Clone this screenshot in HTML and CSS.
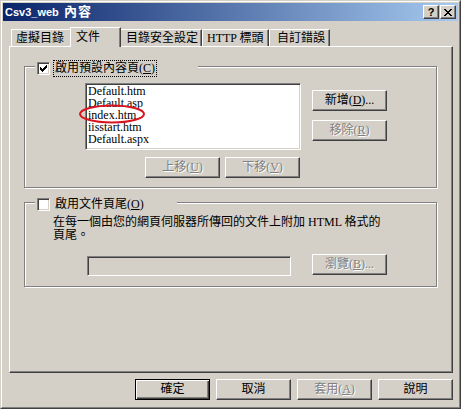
FILE: index.html
```html
<!DOCTYPE html>
<html lang="zh-Hant">
<head>
<meta charset="utf-8">
<title>Csv3_web 內容</title>
<link rel="stylesheet" href="styles.css">
</head>
<body>
<div class="window">
  <div class="frame">
    <div class="titlebar">
      <span class="title">Csv3_web <span class="title-cjk">內容</span></span>
      <div class="caption-btns">
        <span class="cbtn help">?</span>
        <span class="cbtn close">
          <svg width="8" height="7" viewBox="0 0 8 7"><path d="M0 0h2v1h-2z M6 0h2v1h-2z M1 1h2v1h-2z M5 1h2v1h-2z M2 2h4v1h-4z M3 3h2v1h-2z M2 4h4v1h-4z M1 5h2v1h-2z M5 5h2v1h-2z M0 6h2v1h-2z M6 6h2v1h-2z" fill="#000"/></svg>
        </span>
      </div>
    </div>
    <div class="client">
      <div class="tabs">
        <div class="tab t1">虛擬目錄</div>
        <div class="tab t2 sel">文件</div>
        <div class="tab t3">目錄安全設定</div>
        <div class="tab t4">HTTP 標頭</div>
        <div class="tab t5">自訂錯誤</div>
      </div>
      <div class="panel">
        <div class="group g1">
          <div class="legend l1">
            <span class="check"><svg width="7" height="7" viewBox="0 0 7 7"><path d="M6 0h1v1h-1z M5 1h2v1h-2z M0 2h1v1h-1z M4 2h3v1h-3z M0 3h2v1h-2z M3 3h3v1h-3z M0 4h5v1h-5z M1 5h3v1h-3z M2 6h1v1h-1z" fill="#000"/></svg></span>
            <span class="label focus">啟用預設內容頁(<u>C</u>)</span>
          </div>
          <div class="row">
            <div class="listwrap">
              <div class="listbox">
                <div class="item">Default.htm</div>
                <div class="item">Default.asp</div>
                <div class="item">index.htm</div>
                <div class="item">iisstart.htm</div>
                <div class="item">Default.aspx</div>
              </div>
              <svg class="mark" width="68" height="22" viewBox="0 0 68 22"><ellipse cx="34" cy="11" rx="32" ry="8.5" fill="none" stroke="#d9141e" stroke-width="2"/></svg>
            </div>
            <div class="side">
              <button class="btn">新增(<u>D</u>)...</button>
              <button class="btn dis">移除(<u>R</u>)</button>
            </div>
          </div>
          <div class="moves">
            <button class="btn dis">上移(<u>U</u>)</button>
            <button class="btn dis">下移(<u>V</u>)</button>
          </div>
        </div>
        <div class="group g2">
          <div class="legend l2">
            <span class="check"></span>
            <span class="label">啟用文件頁尾(<u>O</u>)</span>
          </div>
          <div class="desc">在每一個由您的網頁伺服器所傳回的文件上附加 HTML 格式的<br>頁尾。</div>
          <div class="row2">
            <div class="textbox"></div>
            <button class="btn dis">瀏覽(<u>B</u>)...</button>
          </div>
        </div>
      </div>
      <div class="actions">
        <button class="btn def">確定</button>
        <button class="btn">取消</button>
        <button class="btn dis">套用(<u>A</u>)</button>
        <button class="btn">說明</button>
      </div>
    </div>
  </div>
</div>
</body>
</html>
```
FILE: styles.css
```css
* { box-sizing: border-box; }
html, body { margin: 0; padding: 0; }
body {
  background: #D4D0C8;
  width: 461px;
  height: 409px;
  overflow: hidden;
  font-family: "Liberation Serif", "Noto Sans CJK TC", serif;
  font-size: 12px;
  color: #000;
}
.window {
  width: 461px;
  height: 409px;
  border: 1px solid;
  border-color: #D4D0C8 #404040 #404040 #D4D0C8;
}
.frame {
  height: 100%;
  border: 1px solid;
  border-color: #fff #808080 #808080 #fff;
  padding: 1px;
}
.titlebar {
  height: 18px;
  background: linear-gradient(to right, #0A246A, #A6CAF0);
  display: flex;
  align-items: center;
  justify-content: space-between;
  padding: 0 2px 0 2px;
}
.title {
  color: #fff;
  font-family: "Liberation Sans", "Noto Sans CJK TC", sans-serif;
  font-weight: bold;
  font-size: 11px;
  line-height: 18px;
  white-space: nowrap;
}
.title-cjk { font-size: 13px; margin-left: 2px; letter-spacing: 1px; }
.caption-btns { display: flex; gap: 1px; }
.cbtn {
  width: 16px;
  height: 14px;
  background: #D4D0C8;
  border: 1px solid;
  border-color: #fff #404040 #404040 #fff;
  box-shadow: inset -1px -1px #808080;
  display: flex;
  align-items: center;
  justify-content: center;
}
.help {
  font-family: "Liberation Sans", sans-serif;
  font-weight: bold;
  font-size: 11px;
  line-height: 12px;
}
.close svg { display: block; }
.client { padding: 6px 0 0 6px; }
.tabs {
  display: flex;
  align-items: flex-end;
  height: 20px;
  margin-bottom: -1px;
  padding-left: 2px;
}
.tab {
  height: 17px;
  margin-bottom: 1px;
  background: #D4D0C8;
  border-top: 1px solid #fff;
  border-left: 1px solid #fff;
  border-right: 1px solid #404040;
  box-shadow: inset -1px 0 #808080;
  padding: 2px 0 0 4px;
  line-height: 13px;
  white-space: nowrap;
}
.t1 { width: 59px; border-right: none; box-shadow: none; }
.sel { width: 51px; height: 20px; margin-bottom: 0; padding: 3px 0 0 5px; }
.t3 { width: 81px; border-left: none; padding-left: 5px; }
.t4 { width: 67px; }
.t5 { width: 61px; padding-left: 7px; }
.panel {
  width: 444px;
  height: 327px;
  border: 1px solid;
  border-color: #fff #404040 #404040 #fff;
  box-shadow: inset -1px -1px #808080;
  padding: 19px 0 0 14px;
}
.group {
  width: 413px;
  border: 1px solid #808080;
  box-shadow: 1px 1px 0 #fff, inset 1px 1px 0 #fff;
}
.g1 { height: 122px; }
.g2 { height: 85px; margin-top: 14px; }
.legend {
  display: flex;
  align-items: center;
  height: 17px;
  margin-left: 10px;
  padding-left: 2px;
  background: #D4D0C8;
}
.l1 { width: 163px; margin-top: -7px; }
.l2 { width: 142px; margin-top: -7px; }
.check {
  flex: none;
  width: 13px;
  height: 13px;
  background: #fff;
  border: 1px solid;
  border-color: #808080 #fff #fff #808080;
  box-shadow: inset 1px 1px #404040, inset -1px -1px #D4D0C8;
}
.check svg { display: block; margin: 2px 0 0 2px; }
.label {
  margin-left: 3px;
  border: 1px dotted transparent;
  padding: 0 1px;
  line-height: 15px;
  white-space: nowrap;
}
.focus { border-color: #000; }
.row { display: flex; margin: 6px 0 0 60px; }
.listwrap { position: relative; width: 216px; height: 67px; flex: none; }
.listbox {
  height: 100%;
  background: #fff;
  border: 1px solid;
  border-color: #808080 #fff #fff #808080;
  box-shadow: inset 1px 1px #404040, inset -1px -1px #D4D0C8;
  padding: 1px 0 0 2px;
  overflow: hidden;
}
.item {
  font-family: "Liberation Serif", serif;
  font-size: 12px;
  line-height: 12px;
  white-space: nowrap;
}
.mark { position: absolute; left: -7px; top: 20px; }
.side {
  display: flex;
  flex-direction: column;
  gap: 9px;
  margin-left: 11px;
  padding-top: 7px;
}
.moves { display: flex; gap: 5px; margin: 7px 0 0 120px; }
.btn {
  appearance: none;
  width: 75px;
  height: 21px;
  flex: none;
  margin: 0;
  padding: 0;
  background: #D4D0C8;
  border: 1px solid;
  border-color: #fff #404040 #404040 #fff;
  box-shadow: inset -1px -1px #808080;
  font-family: "Liberation Serif", "Noto Sans CJK TC", serif;
  font-size: 12px;
  line-height: 17px;
  color: #000;
  display: flex;
  align-items: center;
  justify-content: center;
  white-space: nowrap;
}
.dis { color: #808080; text-shadow: 1px 1px 0 #fff; }
.def {
  border-color: #000;
  box-shadow: inset 1px 1px #fff, inset -1px -1px #404040, inset -2px -2px #808080;
}
.desc { margin: 3px 0 0 28px; line-height: 13px; white-space: nowrap; }
.row2 { display: flex; align-items: flex-start; margin: 12px 0 0 62px; }
.textbox {
  width: 204px;
  height: 20px;
  margin-top: 2px;
  background: #D4D0C8;
  border: 1px solid;
  border-color: #808080 #fff #fff #808080;
  box-shadow: inset 1px 1px #404040, inset -1px -1px #D4D0C8;
}
.row2 .btn { margin-left: 21px; }
.actions {
  display: flex;
  justify-content: flex-end;
  gap: 6px;
  width: 444px;
  margin-top: 6px;
}
```
